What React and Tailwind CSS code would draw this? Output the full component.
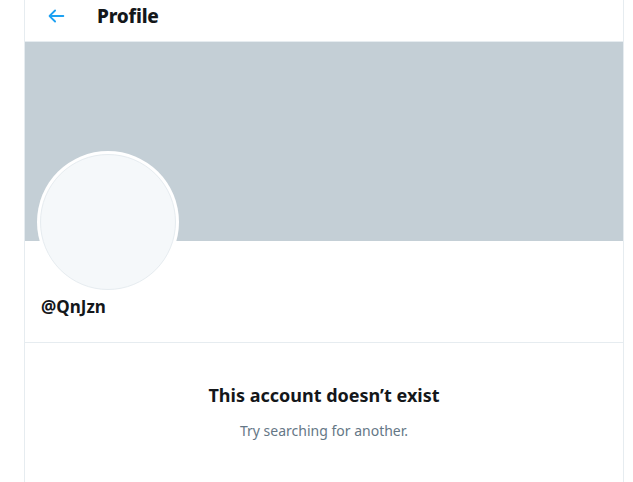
export default function App() {
  return (
    <div className="w-[633px] h-[482px] bg-white overflow-hidden" style={{ fontFamily: '"Noto Sans", "Open Sans", sans-serif' }}>
      <div className="ml-[24px] w-[600px] h-[482px] border-l border-r border-[#e6ecf0] flex flex-col">
        <div className="h-[42px] border-b border-[#e6ecf0] flex items-center">
          <div className="w-[72px] flex items-center pl-[20px] -mt-[9px]">
            <svg width="22" height="22" viewBox="0 0 24 24" fill="#1da1f2">
              <path d="M20 11H7.414l4.293-4.293a1 1 0 0 0-1.414-1.414l-6 6a1 1 0 0 0 0 1.414l6 6a1 1 0 0 0 1.414-1.414L7.414 13H20a1 1 0 1 0 0-2z" />
            </svg>
          </div>
          <div className="text-[19px] font-extrabold text-[#14171a] -mt-[9px] tracking-[-0.2px]">Profile</div>
        </div>
        <div className="h-[199px] bg-[#c4cfd6] shrink-0"></div>
        <div className="relative px-[16px] pt-[54px] pb-[23px] border-b border-[#e6ecf0]">
          <div className="absolute left-[12px] top-[-90px] w-[142px] h-[142px] rounded-full bg-white p-[3px]">
            <div className="w-full h-full rounded-full bg-[#f5f8fa] border border-[#e6ecf0]"></div>
          </div>
          <div className="text-[17px] font-bold text-[#14171a] leading-[24px]">@QnJzn</div>
        </div>
        <div className="flex flex-col items-center pt-[40px]">
          <div className="text-[18px] font-bold text-[#14171a] leading-[24px]">This account doesn’t exist</div>
          <div className="text-[14px] text-[#657786] mt-[15px] leading-[18px]">Try searching for another.</div>
        </div>
      </div>
    </div>
  );
}
